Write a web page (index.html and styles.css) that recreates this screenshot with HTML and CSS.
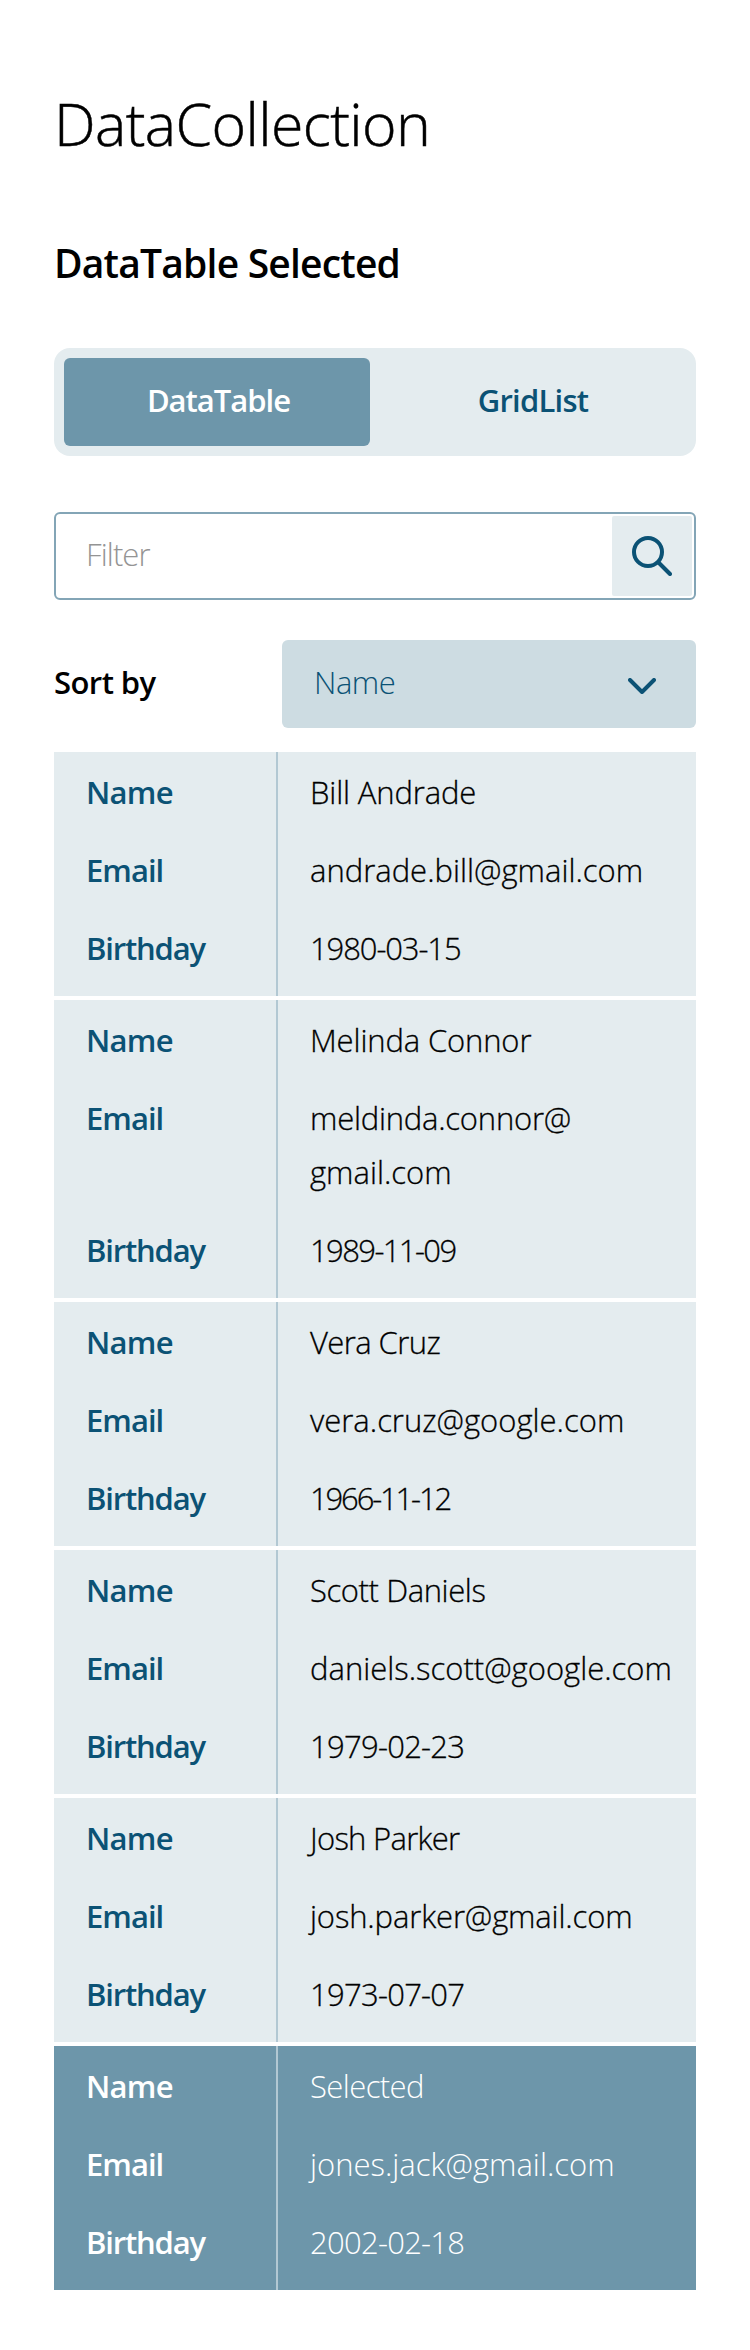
FILE: index.html
```html
<!DOCTYPE html>
<html lang="en">
<head>
<meta charset="utf-8">
<title>DataCollection</title>
<link rel="stylesheet" href="styles.css">
</head>
<body>
<main class="page">
  <h1 class="title">DataCollection</h1>
  <h2 class="subtitle">DataTable Selected</h2>

  <div class="toggle">
    <button class="toggle-option active"><span class="t-datatable">DataTable</span></button>
    <button class="toggle-option"><span class="t-gridlist">GridList</span></button>
  </div>

  <div class="filter">
    <span class="filter-placeholder">Filter</span>
    <button class="filter-button" aria-label="Search">
      <svg width="40" height="40" viewBox="0 0 40 40" fill="none" stroke="currentColor" stroke-width="4" stroke-linecap="round"><circle cx="16" cy="16" r="14"/><path d="M26.5 26.5 38 38"/></svg>
    </button>
  </div>

  <div class="sort">
    <span class="sort-label">Sort by</span>
    <div class="select">
      <span class="select-value">Name</span>
      <svg width="28" height="16" viewBox="0 0 28 16" fill="none" stroke="currentColor" stroke-width="4" stroke-linecap="round" stroke-linejoin="round"><path d="M2 2 14 14 26 2"/></svg>
    </div>
  </div>

  <div class="records">
    <dl class="record">
      <dt class="l-name">Name</dt><dd class="fit-1">Bill Andrade</dd>
      <dt class="l-email">Email</dt><dd>andrade.bill@gmail.com</dd>
      <dt class="l-birthday">Birthday</dt><dd class="fit-6">1980-03-15</dd>
    </dl>
    <dl class="record">
      <dt class="l-name">Name</dt><dd class="fit-1">Melinda Connor</dd>
      <dt class="l-email">Email</dt><dd><span class="fit-2">meldinda.connor@</span><br>gmail.com</dd>
      <dt class="l-birthday">Birthday</dt><dd class="fit-7">1989-11-09</dd>
    </dl>
    <dl class="record">
      <dt class="l-name">Name</dt><dd class="fit-4">Vera Cruz</dd>
      <dt class="l-email">Email</dt><dd>vera.cruz@google.com</dd>
      <dt class="l-birthday">Birthday</dt><dd class="fit-8">1966-11-12</dd>
    </dl>
    <dl class="record">
      <dt class="l-name">Name</dt><dd class="fit-3">Scott Daniels</dd>
      <dt class="l-email">Email</dt><dd>daniels.scott@google.com</dd>
      <dt class="l-birthday">Birthday</dt><dd class="fit-5">1979-02-23</dd>
    </dl>
    <dl class="record">
      <dt class="l-name">Name</dt><dd class="fit-5">Josh Parker</dd>
      <dt class="l-email">Email</dt><dd class="fit-1">josh.parker@gmail.com</dd>
      <dt class="l-birthday">Birthday</dt><dd class="fit-5">1973-07-07</dd>
    </dl>
    <dl class="record selected">
      <dt class="l-name">Name</dt><dd class="fit-4">Selected</dd>
      <dt class="l-email">Email</dt><dd>jones.jack@gmail.com</dd>
      <dt class="l-birthday">Birthday</dt><dd class="fit-5">2002-02-18</dd>
    </dl>
  </div>
</main>
</body>
</html>
```
FILE: styles.css
```css
:root {
  --dark: #0b5275;
  --mid: #6d96aa;
  --light: #e4ecef;
}

* { box-sizing: border-box; }

body {
  margin: 0;
  background: #fff;
  color: #000;
  font: 300 31px/54px "Segoe UI", "Open Sans", "Noto Sans", sans-serif;
}

button {
  border: 0;
  padding: 0;
  background: none;
  font: inherit;
  color: inherit;
}

svg { display: block; }

.page { padding: 83px 54px 60px; }

.title {
  margin: 0;
  font-size: 59px;
  font-weight: 300;
  line-height: 80px;
  letter-spacing: -0.6px;
  -webkit-text-stroke: 0.5px;
}

.subtitle {
  margin: 73px 0 58px;
  font-size: 39px;
  font-weight: 600;
  letter-spacing: -0.8px;
}

.toggle {
  display: grid;
  grid-template-columns: 306px 1fr;
  gap: 10px;
  height: 108px;
  padding: 10px;
  border-radius: 16px;
  background: var(--light);
  color: var(--dark);
}

.toggle-option {
  border-radius: 6px;
  padding-bottom: 4px;
  font-weight: 600;
}

.toggle-option.active {
  background: var(--mid);
  color: #fff;
}

.t-datatable { letter-spacing: -1px; padding-left: 3px; }
.t-gridlist { letter-spacing: -0.78px; }

.filter {
  display: flex;
  align-items: center;
  justify-content: space-between;
  height: 88px;
  margin-top: 56px;
  padding: 0 2px 0 30px;
  border: 2px solid #83a5b6;
  border-radius: 6px;
}

.filter-placeholder {
  padding-bottom: 4px;
  color: #949494;
  letter-spacing: -0.9px;
}

.filter-button {
  display: flex;
  align-items: center;
  justify-content: center;
  width: 80px;
  height: 80px;
  border-radius: 2px;
  background: var(--light);
  color: var(--dark);
}

.sort {
  display: grid;
  grid-template-columns: 228px 1fr;
  align-items: center;
  margin-top: 40px;
}

.sort-label {
  padding-bottom: 4px;
  font-weight: 600;
  letter-spacing: -0.57px;
}

.select {
  display: flex;
  align-items: center;
  justify-content: space-between;
  height: 88px;
  padding: 0 40px 0 32px;
  border-radius: 6px;
  background: #cddce2;
  color: var(--dark);
}

.select svg { margin-top: 4px; }

.select-value {
  padding-bottom: 4px;
  letter-spacing: -0.46px;
}

.records {
  display: grid;
  gap: 4px;
  margin-top: 24px;
}

.record {
  display: grid;
  grid-template-columns: 224px 1fr;
  margin: 0;
  background: var(--light);
}

.record dt {
  padding: 13px 0 11px 32px;
  border-right: 2px solid #b2c8d3;
  color: var(--dark);
  font-weight: 600;
}

.record dd {
  margin: 0;
  padding: 13px 0 11px 32px;
  white-space: nowrap;
  -webkit-text-stroke: 0.3px;
}

/* The first and last lines carry the record's outer padding. */
.record dt:first-of-type,
.record dd:first-of-type { padding-top: 13px; }
.record dt:last-of-type,
.record dd:last-of-type { padding-bottom: 21px; }

.record.selected { background: var(--mid); }
.record.selected dt { color: #fff; }
.record.selected dd { color: #fff; -webkit-text-stroke: 0; }

.l-name { letter-spacing: -0.7px; }
.l-email { letter-spacing: -0.97px; }
.l-birthday { letter-spacing: -1.17px; }

.fit-1 { letter-spacing: -0.14px; }
.fit-2 { letter-spacing: -0.23px; }
.fit-3 { letter-spacing: -0.4px; }
.fit-4 { letter-spacing: -0.58px; }
.fit-5 { letter-spacing: -0.72px; }
.fit-6 { letter-spacing: -1.1px; }
.fit-7 { letter-spacing: -1.6px; }
.fit-8 { letter-spacing: -2.15px; }
```
